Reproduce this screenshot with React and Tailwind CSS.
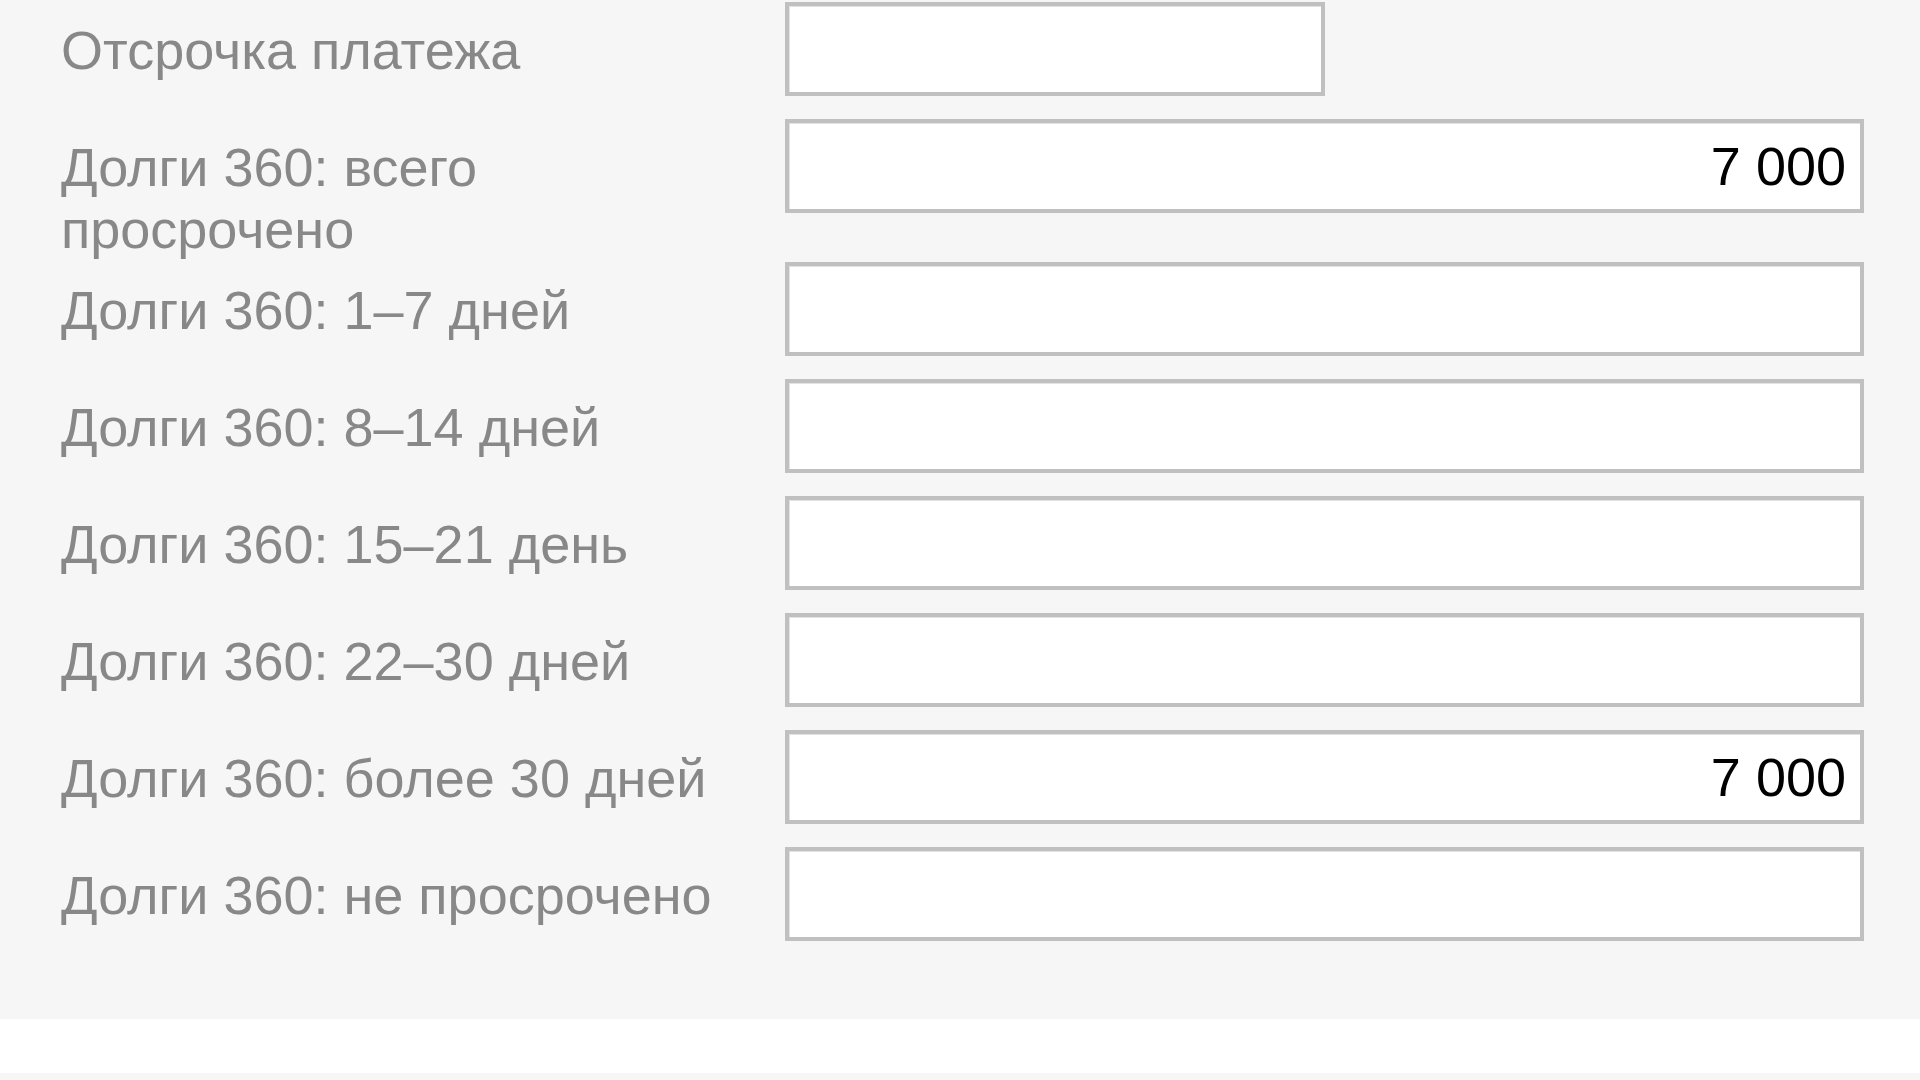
import React from 'react';

const rows = [
  { label: 'Отсрочка платежа', value: '', short: true },
  { label: 'Долги 360: всего просрочено', value: '7 000' },
  { label: 'Долги 360: 1–7 дней', value: '' },
  { label: 'Долги 360: 8–14 дней', value: '' },
  { label: 'Долги 360: 15–21 день', value: '' },
  { label: 'Долги 360: 22–30 дней', value: '' },
  { label: 'Долги 360: более 30 дней', value: '7 000' },
  { label: 'Долги 360: не просрочено', value: '' },
];

export default function App() {
  return (
    <div className="w-[1920px] h-[1080px] bg-white overflow-hidden flex flex-col" style={{ fontFamily: '"Liberation Sans", Arial, sans-serif' }}>
      <div className="bg-[#f6f6f6] pt-[2px] pb-[55px]">
        {rows.map((row) => (
          <div key={row.label} className="flex items-start">
            <div className="w-[785px] shrink-0 pl-[61px] pr-[40px] pt-[17px] pb-[2px] text-[54px] leading-[62px] text-[#888888]">
              {row.label}
            </div>
            <div className="mb-[23px]">
              <input
                type="text"
                readOnly
                value={row.value}
                className={`${row.short ? 'w-[540px]' : 'w-[1079px]'} h-[94px] bg-white border-4 border-[#c0c0c0] shadow-[inset_1px_1px_0_#e2e2e2] outline-none text-right pr-[14px] text-[54px] text-black`}
                style={{ fontFamily: '"Liberation Sans", Arial, sans-serif' }}
              />
            </div>
          </div>
        ))}
      </div>
      <div className="h-[54px] bg-white" />
      <div className="flex-1 bg-[#f6f6f6]" />
    </div>
  );
}
